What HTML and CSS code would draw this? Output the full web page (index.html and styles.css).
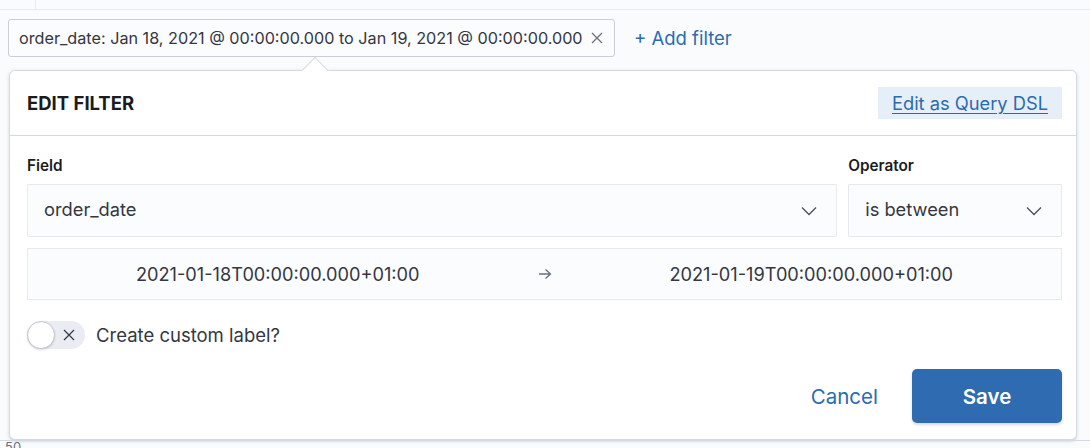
FILE: index.html
```html
<!DOCTYPE html>
<html>
<head>
<meta charset="utf-8">
<link rel="stylesheet" href="styles.css">
</head>
<body>
<div class="topbar"><div class="topcell"></div></div>
<div class="filterbar">
  <div class="pill">
    <span class="pill-text">order_date: Jan 18, 2021 @ 00:00:00.000 to Jan 19, 2021 @ 00:00:00.000</span>
    <svg class="pill-x" width="12" height="12" viewBox="0 0 12 12"><path d="M1 1L11 11M11 1L1 11" stroke="#69707d" stroke-width="1.2" fill="none"/></svg>
  </div>
  <a class="addfilter">+ Add filter</a>
</div>
<div class="popover">
  <div class="arrow"></div>
  <div class="pop-head">
    <h2 class="title">EDIT FILTER</h2>
    <span class="dsl"><a>Edit as Query DSL</a></span>
  </div>
  <div class="pop-body">
    <div class="row">
      <div class="col field-col">
        <label class="lbl">Field</label>
        <div class="select"><span>order_date</span><svg class="chev" width="16" height="10" viewBox="0 0 16 10"><path d="M1 1.5L8 8.5L15 1.5" stroke="#4a4f5a" stroke-width="1.3" fill="none"/></svg></div>
      </div>
      <div class="col op-col">
        <label class="lbl">Operator</label>
        <div class="select"><span>is between</span><svg class="chev" width="16" height="10" viewBox="0 0 16 10"><path d="M1 1.5L8 8.5L15 1.5" stroke="#4a4f5a" stroke-width="1.3" fill="none"/></svg></div>
      </div>
    </div>
    <div class="range">
      <span class="rv">2021-01-18T00:00:00.000+01:00</span>
      <svg class="rarrow" width="14" height="12" viewBox="0 0 14 12"><path d="M1 6H12.5M7.5 1.5L12.5 6L7.5 10.5" stroke="#69707d" stroke-width="1.3" fill="none"/></svg>
      <span class="rv">2021-01-19T00:00:00.000+01:00</span>
    </div>
    <div class="switchrow">
      <span class="switch"><span class="knob"></span><svg class="sx" width="12" height="12" viewBox="0 0 12 12"><path d="M1 1L11 11M11 1L1 11" stroke="#343741" stroke-width="1.2" fill="none"/></svg></span>
      <span class="switch-label">Create custom label?</span>
    </div>
    <div class="footer">
      <a class="cancel">Cancel</a>
      <button class="save">Save</button>
    </div>
  </div>
</div>
<div class="bottomaxis"><span class="tick">50</span></div>
</body>
</html>
```
FILE: styles.css
```css
* { box-sizing: border-box; }
html, body { margin: 0; padding: 0; }
body {
  width: 1090px;
  height: 448px;
  overflow: hidden;
  background: #fafbfd;
  font-family: Inter, "Noto Sans", sans-serif;
  color: #343741;
  position: relative;
}
.topbar {
  height: 10px;
  border-bottom: 1px solid #e6e9f0;
}
.topcell {
  width: 36px;
  height: 9px;
  border-right: 1px solid #e6e9f0;
}
.filterbar {
  display: flex;
  align-items: center;
  margin-top: 9px;
  padding-left: 8px;
  height: 38px;
}
.pill {
  display: flex;
  align-items: center;
  height: 38px;
  padding: 0 11px 0 10px;
  background: #fbfcfd;
  border: 1px solid #c9ced8;
  border-radius: 3px;
  width: 607px;
}
.pill-text {
  font-size: 16.2px;
  color: #343741;
  white-space: nowrap;
}
.pill-x { margin-left: auto; }
.addfilter {
  margin-left: 19px;
  font-size: 18.5px;
  color: #2b6bb0;
}
.popover {
  position: relative;
  margin: 13px 0 0 9px;
  width: 1068px;
  height: 370px;
  background: #fff;
  border: 1px solid #d3dae6;
  border-radius: 6px;
  box-shadow: 0 1px 4px rgba(0,0,0,0.12), 0 2px 2px -1px rgba(0,0,0,0.15);
}
.arrow {
  position: absolute;
  top: -10px;
  left: 295px;
  width: 20px;
  height: 20px;
  background: #fff;
  border-left: 1px solid #d3dae6;
  border-top: 1px solid #d3dae6;
  transform: rotate(45deg);
}
.pop-head {
  position: relative;
  display: flex;
  align-items: center;
  justify-content: space-between;
  height: 65px;
  padding: 0 14px 0 17px;
  border-bottom: 1px solid #d3dae6;
  background: #fff;
  border-radius: 6px 6px 0 0;
}
.title {
  margin: 0;
  font-size: 18.5px;
  font-weight: 700;
  color: #1a1c21;
}
.dsl {
  display: flex;
  align-items: center;
  justify-content: center;
  width: 184px;
  height: 32px;
  background: #e6eff8;
}
.dsl a {
  font-size: 18.3px;
  color: #2b6bb0;
  text-decoration: underline;
  text-underline-offset: 3px;
}
.pop-body {
  padding: 21px 14px 15px 17px;
}
.row {
  display: flex;
  gap: 11px;
}
.col { display: flex; flex-direction: column; }
.field-col { width: 811px; }
.op-col { width: 214px; }
.lbl {
  font-size: 15.3px;
  font-weight: 600;
  color: #1a1c21;
  line-height: 18px;
  margin-bottom: 9px;
}
.select {
  display: flex;
  align-items: center;
  justify-content: space-between;
  height: 53px;
  padding: 0 19px 3px 16px;
  background: #fbfcfd;
  border: 1px solid #e6e9f0;
  border-radius: 1px;
  font-size: 18.3px;
  color: #343741;
}
.select .chev { margin-top: 3px; }
.range {
  display: flex;
  align-items: center;
  margin-top: 11px;
  height: 52px;
  background: #fbfcfd;
  border: 1px solid #e6e9f0;
  font-size: 18.2px;
  color: #343741;
}
.rv { flex: 1; text-align: center; }
.rarrow { flex: none; margin: 0 10px; }
.switchrow {
  display: flex;
  align-items: center;
  margin-top: 20px;
  height: 29px;
}
.switch {
  position: relative;
  display: inline-flex;
  align-items: center;
  width: 58px;
  height: 28px;
  border-radius: 14px;
  background: #e9edf3;
}
.knob {
  position: absolute;
  left: 0;
  top: 0;
  width: 28px;
  height: 28px;
  border-radius: 50%;
  background: #fff;
  border: 1px solid #c2c7d0;
  box-shadow: 0 1px 2px rgba(0,0,0,0.15);
}
.sx { position: absolute; left: 36px; top: 8px; }
.switch-label {
  margin-left: 11px;
  font-size: 18.5px;
  color: #343741;
}
.footer {
  display: flex;
  justify-content: flex-end;
  align-items: center;
  margin-top: 20px;
  height: 54px;
}
.cancel {
  font-size: 20.5px;
  color: #2b6bb0;
  margin-right: 34px;
}
.save {
  width: 150px;
  height: 54px;
  border: none;
  border-radius: 5px;
  background: #2f6bb0;
  color: #fff;
  font-family: inherit;
  font-size: 20.5px;
  font-weight: 600;
  box-shadow: 0 2px 3px rgba(0,0,0,0.15);
}
.bottomaxis {
  position: absolute;
  left: 0;
  top: 440px;
  width: 1090px;
  height: 8px;
  border-top: 1px solid #d3dae6;
}
.tick {
  position: absolute;
  left: 5px;
  top: -1px;
  font-size: 13px;
  color: #69707d;
  line-height: 14px;
}
```
